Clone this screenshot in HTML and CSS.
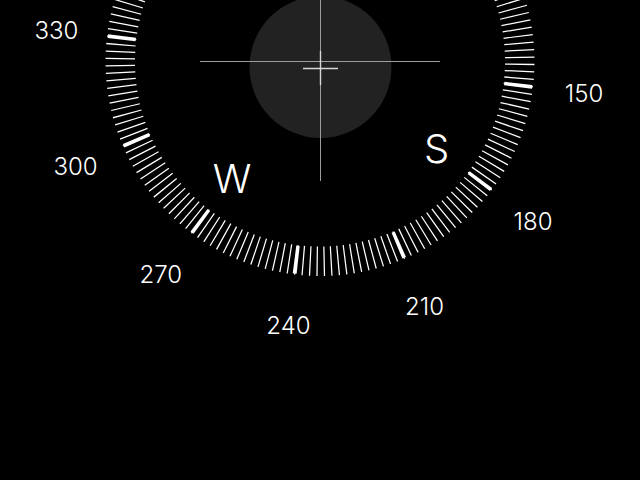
FILE: index.html
```html
<!DOCTYPE html>
<html lang="en">
<head>
<meta charset="utf-8">
<title>Compass</title>
<link rel="stylesheet" href="styles.css">
</head>
<body>
<main class="screen">
  <svg class="dial" width="640" height="480" viewBox="0 0 640 480" xmlns="http://www.w3.org/2000/svg">
    <circle class="bubble" cx="320.5" cy="67" r="71"/>
    <g transform="translate(320 61.5) rotate(-143.2)">
      <circle class="ticks-thin" r="199.75" pathLength="360"/>
      <circle class="ticks-thick" r="199.6" pathLength="360"/>
    </g>
    <line class="cross-long" x1="200" y1="61.5" x2="440" y2="61.5"/>
    <line class="cross-long" x1="320.5" y1="0" x2="320.5" y2="181"/>
    <line class="cross-small" x1="303" y1="68.5" x2="338" y2="68.5"/>
    <line class="cross-small" x1="320.5" y1="51" x2="320.5" y2="85"/>
    <g class="deg">
      <text x="56.5" y="38.7">330</text>
      <text x="75.5" y="175">300</text>
      <text x="160.8" y="283.3">270</text>
      <text x="288.5" y="334.4">240</text>
      <text x="424.6" y="314.8">210</text>
      <text x="533" y="229.6">180</text>
      <text x="584" y="101.8">150</text>
    </g>
    <g class="card">
      <text x="232" y="192.6">W</text>
      <text x="436.6" y="163">S</text>
    </g>
  </svg>
</main>
</body>
</html>
```

FILE: styles.css
```css
html, body {
  margin: 0;
  padding: 0;
  background: #000;
}
.screen {
  width: 640px;
  height: 480px;
  overflow: hidden;
  background: #000;
}
.dial {
  display: block;
}
.bubble {
  fill: #222222;
}
.ticks-thin {
  fill: none;
  stroke: #ffffff;
  stroke-width: 29.5;
  stroke-dasharray: 0.36 1.64;
  stroke-dashoffset: 0.18;
}
.ticks-thick {
  fill: none;
  stroke: #ffffff;
  stroke-width: 28;
  stroke-dasharray: 1.05 28.95;
  stroke-dashoffset: 0.525;
}
.cross-long {
  stroke: #9c9c9c;
  stroke-width: 1;
}
.cross-small {
  stroke: #d6d6d6;
  stroke-width: 1.4;
}
.deg text {
  font-family: Inter, "Liberation Sans", sans-serif;
  font-size: 24px;
  font-weight: 300;
  fill: #ffffff;
  text-anchor: middle;
}
.card text {
  font-family: Inter, "Liberation Sans", sans-serif;
  font-size: 40px;
  font-weight: 300;
  fill: #ffffff;
  text-anchor: middle;
}
```
